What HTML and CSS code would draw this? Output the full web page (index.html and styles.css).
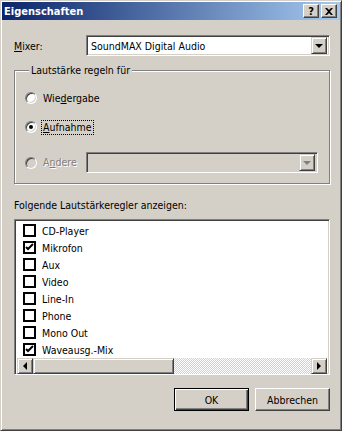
FILE: index.html
```html
<!DOCTYPE html>
<html lang="de">
<head>
  <meta charset="UTF-8">
  <title>Eigenschaften</title>
  <link rel="stylesheet" href="styles.css">
</head>
<body>

  <div class="window">
    <div class="titlebar">
      <span class="title">Eigenschaften</span>
      <div class="title-buttons">
        <span class="tbtn help">?</span>
        <span class="tbtn close">
          <svg width="8" height="7" viewBox="0 0 8 7"><path d="M0 0h2l2 2 2-2h2L5 3.5 8 7H6L4 5 2 7H0l3-3.5z" fill="#000"/></svg>
        </span>
      </div>
    </div>

    <div class="content">

      <div class="mixer-row">
        <label class="field-label"><u>M</u>ixer:</label>
        <div class="combo">
          <span class="combo-text">SoundMAX Digital Audio</span>
          <span class="combo-btn"><span class="arrow-down"></span></span>
        </div>
      </div>

      <fieldset class="group">
        <legend>Lautstärke regeln für</legend>

        <div class="radio-row">
          <span class="radio"></span>
          <span class="radio-text">Wie<u>d</u>ergabe</span>
        </div>

        <div class="radio-row second">
          <span class="radio checked"></span>
          <span class="radio-text focused"><u>A</u>ufnahme</span>
        </div>

        <div class="radio-row other">
          <span class="radio disabled"></span>
          <span class="radio-text disabled-text">A<u>n</u>dere</span>
          <div class="combo disabled-combo">
            <span class="combo-text"></span>
            <span class="combo-btn"><span class="arrow-down gray"></span></span>
          </div>
        </div>
      </fieldset>

      <div class="list-label">Folgende Lautstärkeregler anzeigen:</div>

      <div class="listbox">
        <ul class="items">
          <li><span class="check"></span>CD-Player</li>
          <li><span class="check on"><svg width="9" height="9" viewBox="0 0 9 9"><path d="M1 4l2 2 5-5" stroke="#000" stroke-width="2" fill="none"/></svg></span>Mikrofon</li>
          <li><span class="check"></span>Aux</li>
          <li><span class="check"></span>Video</li>
          <li><span class="check"></span>Line-In</li>
          <li><span class="check"></span>Phone</li>
          <li><span class="check"></span>Mono Out</li>
          <li><span class="check on"><svg width="9" height="9" viewBox="0 0 9 9"><path d="M1 4l2 2 5-5" stroke="#000" stroke-width="2" fill="none"/></svg></span>Waveausg.-Mix</li>
        </ul>
        <div class="hscroll">
          <span class="sbtn"><span class="arrow-left"></span></span>
          <span class="thumb"></span>
          <span class="track"></span>
          <span class="sbtn"><span class="arrow-right"></span></span>
        </div>
      </div>

      <div class="buttons">
        <button class="btn default">OK</button>
        <button class="btn">Abbrechen</button>
      </div>

    </div>
  </div>

</body>
</html>
```

FILE: styles.css
```css
body {
  margin: 0;
  background: #d4d0c8;
  font-family: 'DejaVu Sans Condensed', 'DejaVu Sans', sans-serif;
  font-stretch: condensed;
  font-size: 10.5px;
  color: #000;
}

.window {
  width: 342px;
  height: 431px;
  box-sizing: border-box;
  background: #d4d0c8;
  border: 1px solid;
  border-color: #d4d0c8 #404040 #404040 #d4d0c8;
  box-shadow: inset 1px 1px #fff, inset -1px -1px #808080;
  padding: 1px;
  display: flex;
  flex-direction: column;
}

/* title bar */
.titlebar {
  height: 18px;
  background: linear-gradient(to right, #0a246a, #a6caf0);
  display: flex;
  align-items: center;
  justify-content: space-between;
  padding: 0 3px 0 2px;
}

.title {
  color: #fff;
  font-weight: bold;
  font-size: 11px;
}

.title-buttons {
  display: flex;
  gap: 2px;
}

.tbtn {
  width: 16px;
  height: 14px;
  box-sizing: border-box;
  background: #d4d0c8;
  border: 1px solid;
  border-color: #fff #404040 #404040 #fff;
  box-shadow: inset -1px -1px #808080;
  display: flex;
  align-items: center;
  justify-content: center;
  font-weight: bold;
  font-size: 11px;
}

/* content */
.content {
  display: flex;
  flex-direction: column;
  padding: 0 10px 0 12px;
}

.mixer-row {
  display: flex;
  align-items: center;
  margin-top: 15px;
  height: 21px;
}

.field-label {
  width: 72px;
}

.combo {
  flex: 1;
  height: 21px;
  box-sizing: border-box;
  background: #fff;
  border: 1px solid;
  border-color: #808080 #fff #fff #808080;
  box-shadow: inset 1px 1px #404040, inset -1px -1px #d4d0c8;
  display: flex;
  align-items: center;
  padding: 2px;
}

.combo-text {
  flex: 1;
  padding-left: 2px;
}

.combo-btn {
  width: 16px;
  height: 17px;
  box-sizing: border-box;
  background: #d4d0c8;
  border: 1px solid;
  border-color: #d4d0c8 #404040 #404040 #d4d0c8;
  box-shadow: inset 1px 1px #fff, inset -1px -1px #808080;
  display: flex;
  align-items: center;
  justify-content: center;
}

.arrow-down {
  width: 0;
  height: 0;
  border-left: 4px solid transparent;
  border-right: 4px solid transparent;
  border-top: 4px solid #000;
  margin-top: 1px;
}

.arrow-down.gray {
  border-top-color: #808080;
}

/* group box */
.group {
  margin: 8px 0 0;
  padding: 13px 10px 10px;
  border: 1px solid #808080;
  box-shadow: inset 1px 1px #fff, 1px 1px 0 #fff;
}

.group legend {
  padding: 0 2px;
  margin-left: 4px;
  line-height: 13px;
  background: #d4d0c8;
}

.radio-row {
  display: flex;
  align-items: center;
  height: 16px;
}

.radio-row.second {
  margin-top: 13px;
}

.radio-row.other {
  margin-top: 17px;
  height: 21px;
}

.radio {
  width: 12px;
  height: 12px;
  box-sizing: border-box;
  border-radius: 50%;
  background: #fff;
  border: 1px solid;
  border-color: #808080 #fff #fff #808080;
  box-shadow: inset 1px 1px #404040, inset -1px -1px #d4d0c8;
  position: relative;
  flex-shrink: 0;
}

.radio.checked::after {
  content: "";
  position: absolute;
  left: 3px;
  top: 3px;
  width: 4px;
  height: 4px;
  border-radius: 50%;
  background: #000;
}

.radio.disabled {
  background: #d4d0c8;
}

.radio-text {
  margin-left: 4px;
  padding: 0 1px;
  line-height: 13px;
  border: 1px solid transparent;
}

.radio-text.focused {
  border: 1px dotted #000;
}

.disabled-text {
  color: #808080;
  text-shadow: 1px 1px #fff;
  width: 41px;
}

.disabled-combo {
  flex: none;
  width: 232px;
  background: #d4d0c8;
}

/* list */
.list-label {
  margin-top: 15px;
  line-height: 13px;
}

.listbox {
  margin-top: 7px;
  height: 156px;
  box-sizing: border-box;
  background: #fff;
  border: 1px solid;
  border-color: #808080 #fff #fff #808080;
  box-shadow: inset 1px 1px #404040, inset -1px -1px #d4d0c8;
  padding: 2px;
  display: flex;
  flex-direction: column;
}

.items {
  list-style: none;
  margin: 0;
  padding: 0 0 0 6px;
  flex: 1;
}

.items li {
  height: 17px;
  display: flex;
  align-items: center;
}

.check {
  width: 13px;
  height: 13px;
  box-sizing: border-box;
  border: 2px solid #000;
  margin-right: 6px;
  display: flex;
  align-items: center;
  justify-content: center;
}

.hscroll {
  height: 16px;
  display: flex;
}

.sbtn {
  width: 16px;
  height: 16px;
  box-sizing: border-box;
  background: #d4d0c8;
  border: 1px solid;
  border-color: #d4d0c8 #404040 #404040 #d4d0c8;
  box-shadow: inset 1px 1px #fff, inset -1px -1px #808080;
  display: flex;
  align-items: center;
  justify-content: center;
}

.arrow-left {
  width: 0;
  height: 0;
  border-top: 4px solid transparent;
  border-bottom: 4px solid transparent;
  border-right: 4px solid #000;
}

.arrow-right {
  width: 0;
  height: 0;
  border-top: 4px solid transparent;
  border-bottom: 4px solid transparent;
  border-left: 4px solid #000;
}

.thumb {
  width: 141px;
  box-sizing: border-box;
  background: #d4d0c8;
  border: 1px solid;
  border-color: #d4d0c8 #404040 #404040 #d4d0c8;
  box-shadow: inset 1px 1px #fff, inset -1px -1px #808080;
}

.track {
  flex: 1;
  background: repeating-conic-gradient(#d4d0c8 0 25%, #fff 0 50%) 0 0 / 2px 2px;
}

/* buttons */
.buttons {
  display: flex;
  justify-content: flex-end;
  gap: 6px;
  margin-top: 13px;
}

.btn {
  width: 75px;
  height: 23px;
  box-sizing: border-box;
  font-family: inherit;
  font-stretch: condensed;
  font-size: 10.5px;
  color: #000;
  background: #d4d0c8;
  border: 1px solid;
  border-color: #fff #404040 #404040 #fff;
  box-shadow: inset -1px -1px #808080, inset 1px 1px #d4d0c8;
  padding: 0;
}

.btn.default {
  border: 1px solid #000;
  box-shadow: inset 1px 1px #fff, inset -1px -1px #404040, inset -2px -2px #808080;
}
```
